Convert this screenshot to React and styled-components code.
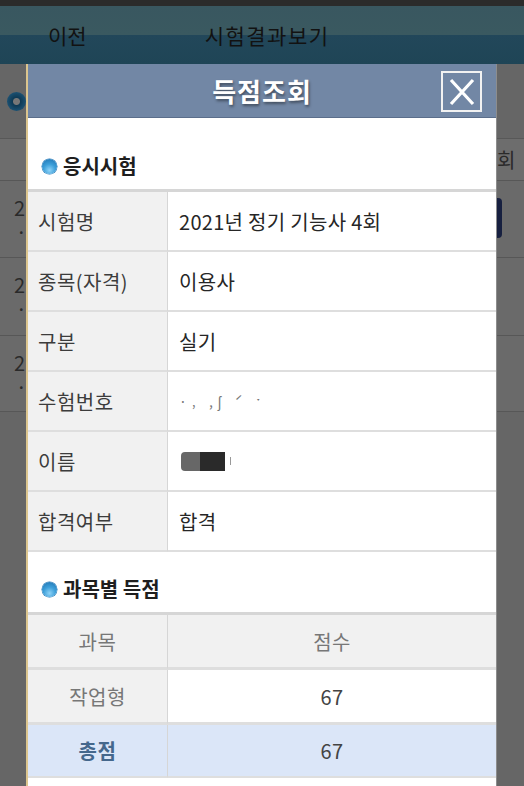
import React from "react";
import styled, { createGlobalStyle } from "styled-components";

const Global = createGlobalStyle`
  html, body { margin: 0; padding: 0; background: #666; }
  body { font-family: "Noto Sans CJK KR", "Noto Sans", sans-serif; }
  * { box-sizing: border-box; }
`;

const Page = styled.div`
  position: relative;
  width: 524px;
  height: 786px;
  overflow: hidden;
  background: #666;
  display: flex;
  flex-direction: column;
`;

const StatusBar = styled.div`
  height: 6px;
  background: #2b2b2b;
`;

const AppHeader = styled.div`
  height: 58px;
  background: linear-gradient(#395760 0, #3a5960 50%, #22475a 50%, #1f4556 100%);
  display: flex;
  align-items: center;
  padding-left: 48px;
  font-size: 21px;
  color: #121212;
`;

const HeaderTitle = styled.span`
  margin-left: ${(p) => p.$gap}px;
  letter-spacing: 1.5px;
`;

const Under = styled.div`
  display: flex;
  flex-direction: column;
`;

const UnderIconRow = styled.div`
  height: 74px;
  display: flex;
  align-items: center;
  padding-left: 7px;
`;

const Ring = styled.div`
  width: 19px;
  height: 19px;
  border-radius: 50%;
  background: radial-gradient(circle at 50% 50%, #777 0 3px, #0f3a55 4px, #1a4f70 9px);
`;

const UnderTable = styled.div`
  display: grid;
  grid-template-columns: 1fr 30px;
  border-top: 1px solid #585858;
`;

const UnderCell = styled.div`
  height: ${(p) => p.$h}px;
  background: ${(p) => (p.$head ? "#6d6d6d" : "#6a6a6a")};
  border-bottom: 1px solid #575757;
  display: flex;
  align-items: ${(p) => (p.$head ? "center" : "flex-start")};
  padding: ${(p) => (p.$head ? "0 0 0 3px" : "18px 0 0 14px")};
  font-size: 20px;
  line-height: 18px;
  color: #2a2a2a;
  white-space: pre;
  overflow: hidden;
`;

const NavyBtn = styled.div`
  width: 8px;
  height: 40px;
  margin-top: -1px;
  margin-left: -14px;
  background: #172040;
  border-radius: 0 4px 4px 0;
`;

const Modal = styled.div`
  position: absolute;
  left: 26px;
  top: 64px;
  width: 471px;
  bottom: 0;
  background: #fff;
  border-left: 2px solid #dcc58e;
  border-right: 1px solid #8d8d8d;
  display: flex;
  flex-direction: column;
`;

const TitleBar = styled.div`
  height: 54px;
  background: #7287a5;
  border-bottom: 1px solid #5b6e8b;
  display: flex;
  align-items: center;
  justify-content: center;
  position: relative;
`;

const Title = styled.h1`
  margin: 0;
  font-size: 26px;
  font-weight: 700;
  color: #fff;
  text-shadow: 1px 2px 3px rgba(0, 0, 0, 0.45);
  letter-spacing: 1px;
`;

const CloseBox = styled.button`
  position: absolute;
  right: 14px;
  top: 7px;
  width: 41px;
  height: 41px;
  padding: 0;
  border: 2px solid #f2f2f2;
  background: transparent;
  display: flex;
  align-items: center;
  justify-content: center;
`;

const SectionHead = styled.div`
  height: ${(p) => p.$h}px;
  display: flex;
  align-items: flex-end;
  padding: 0 0 ${(p) => p.$pb}px 14px;
  gap: 6px;
  font-size: 20px;
  font-weight: 700;
  color: #1e1e1e;
  line-height: 24px;
`;

const Ball = styled.span`
  width: 15px;
  height: 15px;
  border-radius: 50%;
  margin-bottom: 4px;
  background: radial-gradient(circle at 50% 75%, #8fd3f7 0, #3d9fd9 45%, #1c6fae 100%);
  box-shadow: 0 0 0 0.5px #2a7ab8;
`;

const InfoTable = styled.div`
  display: grid;
  grid-template-columns: 140px 1fr;
  border-top: 3px solid #d6d6d6;
`;

const Label = styled.div`
  height: ${(p) => p.$h}px;
  background: ${(p) => (p.$total ? "#dbe6f8" : "#f1f1f1")};
  border-right: 1px solid #d6d6d6;
  border-bottom: ${(p) => p.$bb}px solid #dedede;
  display: flex;
  align-items: center;
  justify-content: ${(p) => (p.$center ? "center" : "flex-start")};
  padding-left: ${(p) => (p.$center ? 0 : 10)}px;
  font-size: 20px;
  color: ${(p) => p.$color || "#3c3c3c"};
  font-weight: ${(p) => (p.$total ? 700 : 400)};
  letter-spacing: 0.5px;
`;

const Value = styled.div`
  height: ${(p) => p.$h}px;
  background: ${(p) => (p.$total ? "#dbe6f8" : p.$head ? "#f1f1f1" : "#fff")};
  border-bottom: ${(p) => p.$bb}px solid #dedede;
  display: flex;
  align-items: center;
  justify-content: ${(p) => (p.$center ? "center" : "flex-start")};
  padding-left: ${(p) => (p.$center ? 0 : 11)}px;
  font-size: 20px;
  color: ${(p) => p.$color || "#262626"};
  letter-spacing: 0.3px;
`;

const Smudge = styled.span`
  font-size: 14px;
  color: #555;
  letter-spacing: 5px;
  opacity: 0.8;
`;

const Redact = styled.span`
  display: inline-flex;
  align-items: center;
  height: 19px;
  margin-left: 2px;
`;

const RedactBlock = styled.span`
  width: ${(p) => p.$w}px;
  height: 19px;
  background: ${(p) => p.$c};
  border-radius: ${(p) => p.$r};
`;

const Tick = styled.span`
  width: 1px;
  height: 8px;
  margin-left: 5px;
  background: #999;
`;

const infoRows = [
  ["시험명", "2021년 정기 기능사 4회"],
  ["종목(자격)", "이용사"],
  ["구분", "실기"],
  ["수험번호", "smudge"],
  ["이름", "redact"],
  ["합격여부", "합격"],
];

function renderValue(v) {
  if (v === "smudge") return <Smudge>{"·‚ ,ʃ ˊ ˑ"}</Smudge>;
  if (v === "redact")
    return (
      <Redact>
        <RedactBlock $w={19} $c="#676767" $r="4px 0 0 4px" />
        <RedactBlock $w={25} $c="#2a2a2a" $r="0" />
        <Tick />
      </Redact>
    );
  return v;
}

export default function App() {
  return (
    <>
      <Global />
      <Page>
        <StatusBar />
        <AppHeader>
          <span>이전</span>
          <HeaderTitle $gap={118}>시험결과보기</HeaderTitle>
        </AppHeader>
        <Under>
          <UnderIconRow>
            <Ring />
          </UnderIconRow>
          <UnderTable>
            <UnderCell $head $h={42} />
            <UnderCell $head $h={42}>회</UnderCell>
            <UnderCell $h={77}>{"2\n ."}</UnderCell>
            <UnderCell $h={77}>
              <NavyBtn />
            </UnderCell>
            <UnderCell $h={78}>{"2\n ."}</UnderCell>
            <UnderCell $h={78} />
            <UnderCell $h={76}>{"2\n ."}</UnderCell>
            <UnderCell $h={76} />
          </UnderTable>
        </Under>

        <Modal>
          <TitleBar>
            <Title>득점조회</Title>
            <CloseBox aria-label="닫기">
              <svg width="30" height="30" viewBox="0 0 30 30">
                <path d="M4 3 L26 27 M26 3 L4 27" stroke="#fff" strokeWidth="3.2" strokeLinecap="butt" />
              </svg>
            </CloseBox>
          </TitleBar>

          <SectionHead $h={71} $pb={11}>
            <Ball />
            응시시험
          </SectionHead>
          <InfoTable>
            {infoRows.map(([k, v]) => (
              <React.Fragment key={k}>
                <Label $h={60} $bb={2}>{k}</Label>
                <Value $h={60} $bb={2}>{renderValue(v)}</Value>
              </React.Fragment>
            ))}
          </InfoTable>

          <SectionHead $h={60} $pb={11}>
            <Ball />
            과목별 득점
          </SectionHead>
          <InfoTable>
            <Label $h={55} $bb={3} $center $color="#777">과목</Label>
            <Value $h={55} $bb={3} $center $head $color="#777">점수</Value>
            <Label $h={55} $bb={3} $center $color="#777">작업형</Label>
            <Value $h={55} $bb={3} $center $color="#444">67</Value>
            <Label $h={53} $bb={2} $center $total $color="#44678c">총점</Label>
            <Value $h={53} $bb={2} $center $total $color="#444">67</Value>
          </InfoTable>
        </Modal>
      </Page>
    </>
  );
}
